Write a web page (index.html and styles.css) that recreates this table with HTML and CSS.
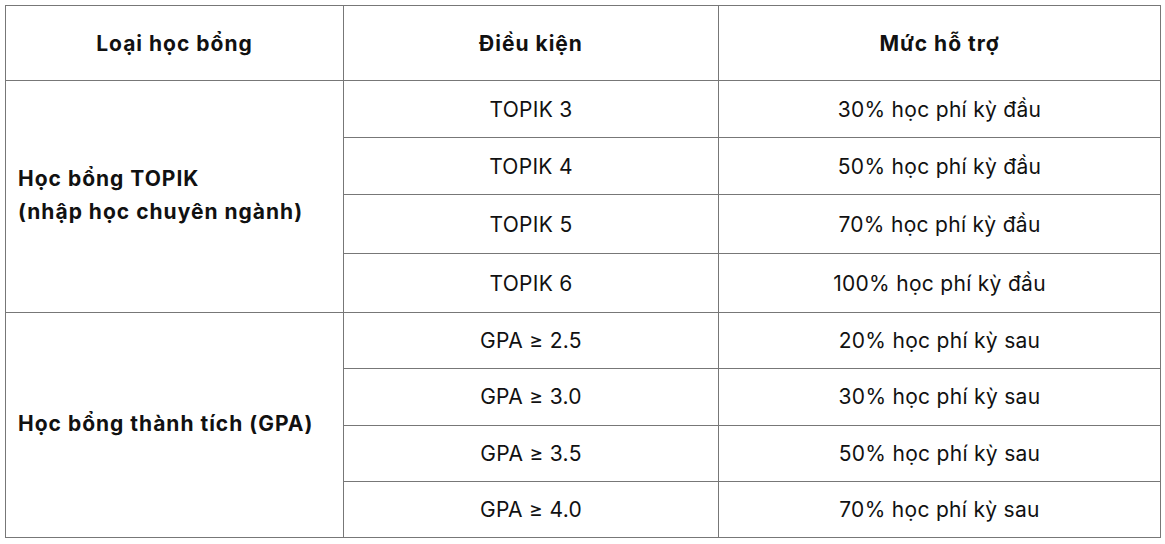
FILE: index.html
```html
<!DOCTYPE html>
<html lang="vi">
<head>
<meta charset="utf-8">
<link rel="stylesheet" href="styles.css">
</head>
<body>
<table class="scholar">
  <colgroup>
    <col class="c1"><col class="c2"><col class="c3">
  </colgroup>
  <thead>
    <tr class="head"><th>Loại học bổng</th><th>Điều kiện</th><th>Mức hỗ trợ</th></tr>
  </thead>
  <tbody>
    <tr><td class="type" rowspan="4">Học bổng TOPIK<br>(nhập học chuyên ngành)</td><td>TOPIK 3</td><td>30% học phí kỳ đầu</td></tr>
    <tr><td>TOPIK 4</td><td>50% học phí kỳ đầu</td></tr>
    <tr class="tall"><td>TOPIK 5</td><td>70% học phí kỳ đầu</td></tr>
    <tr class="tall"><td>TOPIK 6</td><td>100% học phí kỳ đầu</td></tr>
    <tr class="short"><td class="type" rowspan="4">Học bổng thành tích (GPA)</td><td>GPA ≥ 2.5</td><td>20% học phí kỳ sau</td></tr>
    <tr class="short"><td>GPA ≥ 3.0</td><td>30% học phí kỳ sau</td></tr>
    <tr class="short"><td>GPA ≥ 3.5</td><td>50% học phí kỳ sau</td></tr>
    <tr class="short"><td>GPA ≥ 4.0</td><td>70% học phí kỳ sau</td></tr>
  </tbody>
</table>
</body>
</html>
```
FILE: styles.css
```css
html, body {
  margin: 0;
  padding: 0;
  background: #fff;
}
body {
  padding: 5px 0 0 5px;
  font-family: Inter, "Liberation Sans", sans-serif;
  color: #111;
}
.scholar {
  border-collapse: collapse;
  width: 1155px;
  table-layout: fixed;
  font-size: 21px;
  letter-spacing: 0.3px;
}
.c1 { width: 338px; }
.c2 { width: 375px; }
.c3 { width: 442px; }
.scholar th, .scholar td {
  border: 1px solid #777;
  text-align: center;
  vertical-align: middle;
  padding: 0 12px;
  height: 56px;
  line-height: 33px;
}
.scholar .head th {
  height: 74px;
  font-weight: 700;
  letter-spacing: 1px;
}
.scholar tr.tall td {
  height: 58px;
}
.scholar tr.short td {
  height: 55.25px;
}
.scholar td.type {
  text-align: left;
  font-weight: 700;
  letter-spacing: 1px;
  padding-left: 12px;
  padding-bottom: 4px;
}
```
